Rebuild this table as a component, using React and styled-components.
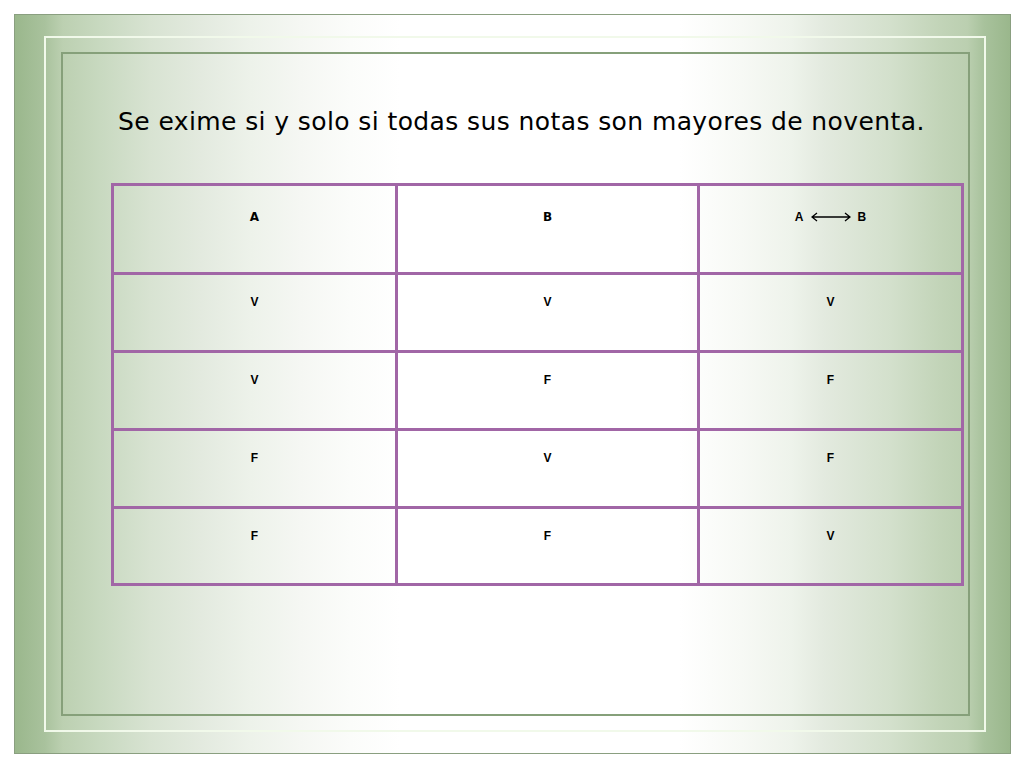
import React from 'react';
import styled, { createGlobalStyle } from 'styled-components';

const GlobalStyle = createGlobalStyle`
  html, body {
    margin: 0;
    padding: 0;
    background: #ffffff;
  }
  * {
    box-sizing: border-box;
  }
`;

// white page with the slide sitting a few pixels in
const Page = styled.div`
  width: 1024px;
  height: 768px;
  padding: 14px 13px 14px 14px;
  background: #ffffff;
`;

// outer slide frame, green at both sides fading to white in the middle
const Frame = styled.div`
  height: 740px;
  border: 1px solid #8a9f80;
  padding: 21px 24px 21px 29px;
  background: linear-gradient(
    to right,
    #9ab78c 0%,
    #a9c29d 3%,
    #bcd0b1 4.8%,
    #c8d9c0 8.6%,
    #d8e3d2 13.6%,
    #e3eadf 18.7%,
    #edf2ea 23.7%,
    #f5f7f3 28.7%,
    #fbfcfa 33.7%,
    #ffffff 38.7%,
    #ffffff 66.8%,
    #f7f9f5 73%,
    #eef3eb 78%,
    #e3eadf 81.3%,
    #d3e0cc 88%,
    #c2d4b8 93%,
    #bbcfb0 95.7%,
    #a8c29c 97.4%,
    #9ab78c 100%
  );
`;

const LightRule = styled.div`
  height: 100%;
  border: 2px solid #f1f9ea;
  padding: 14px 14px 14px 15px;
`;

const Panel = styled.div`
  height: 100%;
  border: 2px solid #86a07a;
`;

const Title = styled.h1`
  margin: 54px 0 0 0;
  padding-left: 55px;
  font-family: "DejaVu Sans", "Liberation Sans", sans-serif;
  font-weight: normal;
  font-size: 25px;
  letter-spacing: 0.4px;
  line-height: 28px;
  color: #000000;
  white-space: nowrap;
`;

const Table = styled.table`
  margin: 47px 0 0 48px;
  width: 850px;
  table-layout: fixed;
  border-collapse: collapse;
  background: transparent;
`;

const Row = styled.tr`
  height: ${p => p.$h}px;
`;

const Cell = styled.td`
  border: 3px solid #a166a6;
  padding: ${p => p.$top}px 0 0 0;
  vertical-align: top;
  text-align: center;
  font-family: ${p => p.$comic ? '"DejaVu Sans", sans-serif' : '"Liberation Sans", Arial, sans-serif'};
  font-weight: bold;
  font-size: 12px;
  line-height: 14px;
  color: #000000;
`;

const Bicond = styled.span`
  display: inline-flex;
  align-items: center;
  gap: 7px;
`;

function Arrow() {
  return (
    <svg width="40" height="10" viewBox="0 0 40 10">
      <path d="M1 5 H39 M6 1 L1 5 L6 9 M34 1 L39 5 L34 9" fill="none" stroke="#000" strokeWidth="1.3" />
    </svg>
  );
}

const rows = [
  ['V', 'V', 'V'],
  ['V', 'F', 'F'],
  ['F', 'V', 'F'],
  ['F', 'F', 'V'],
];

export default function App() {
  return (
    <Page>
      <GlobalStyle />
      <Frame>
        <LightRule>
          <Panel>
            <Title>Se exime si y solo si todas sus notas son mayores de noventa.</Title>
            <Table>
              <colgroup>
                <col style={{ width: 284 }} />
                <col style={{ width: 302 }} />
                <col style={{ width: 264 }} />
              </colgroup>
              <tbody>
                <Row $h={89}>
                  <Cell $top={24} $comic>A</Cell>
                  <Cell $top={24} $comic>B</Cell>
                  <Cell $top={24}>
                    <Bicond>A <Arrow /> B</Bicond>
                  </Cell>
                </Row>
                {rows.map((r, i) => (
                  <Row key={i} $h={i === 3 ? 77 : 78}>
                    {r.map((v, j) => (
                      <Cell key={j} $top={20}>{v}</Cell>
                    ))}
                  </Row>
                ))}
              </tbody>
            </Table>
          </Panel>
        </LightRule>
      </Frame>
    </Page>
  );
}
